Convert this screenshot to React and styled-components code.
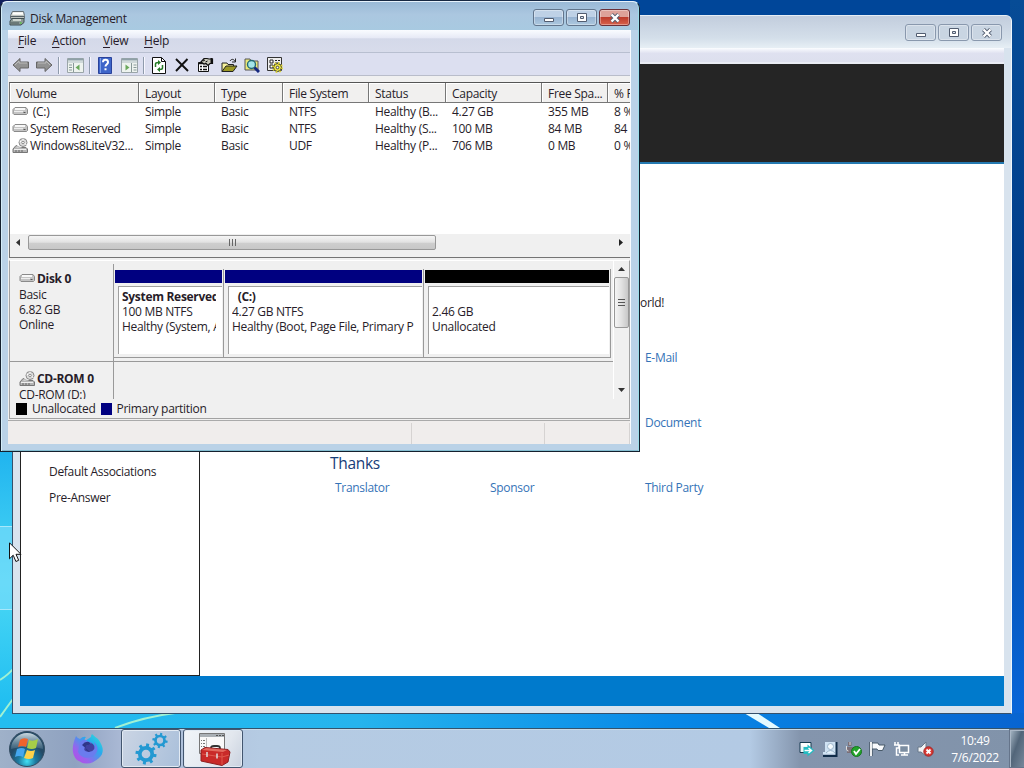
import React from 'react'
import styled, {createGlobalStyle} from 'styled-components'

const volumes = [
  {icon: 'disk', cells: ['\u00a0(C:)', 'Simple', 'Basic', 'NTFS', 'Healthy (B...', '4.27 GB', '355 MB', '8 %']},
  {icon: 'disk', cells: ['System Reserved', 'Simple', 'Basic', 'NTFS', 'Healthy (S...', '100 MB', '84 MB', '84 %']},
  {icon: 'cd', cells: ['Windows8LiteV32...', 'Simple', 'Basic', 'UDF', 'Healthy (P...', '706 MB', '0 MB', '0 %']},
]
const columns = ['Volume', 'Layout', 'Type', 'File System', 'Status', 'Capacity', 'Free Spa...', '% F']

function DriveIcon({kind}) {
  return (
    <Svg width="17" height="15" viewBox="0 0 17 15">
      {kind === 'cd' && <g>
        <circle cx="11" cy="4.5" r="4" fill="#ddd" stroke="#888" />
        <path d="M11 .5v3M7.500 3l2 1M12.500 5.500l2 1" stroke="#fff" />
        <circle cx="11" cy="4.500" r="1.300" fill="#fff" stroke="#888" />
        <path d="M4 7.500 1 11v3.500h14.500V11L14 9.500H8z" fill="#b5b5b5" stroke="#777" />
        <path d="M4.500 9h5M2 11.500h12" stroke="#eee" /><path d="M3 13h8" stroke="#666" strokeDasharray="2 1" />
      </g>}
      {kind === 'disk' && <g>
        <path d="M3 3.500h11l1.500 2v4l-1 1H2l-1-1v-4z" fill="#c4c4c4" stroke="#8a8a8a" />
        <path d="M3 5h10" stroke="#f8f8f8" strokeWidth="2" />
        <path d="M2 7.500h9" stroke="#eee" /><path d="M11.500 8.500h2" stroke="#555" />
      </g>}
    </Svg>
  )
}

function Arrow({flip}) {
  return (
    <ToolSvg width="18" height="16" viewBox="0 0 18 16" $flip={flip}>
      <path d="M1 8 8 1.5V5h8.500v6H8v3.500z" fill="#929292" stroke="#666" />
      <path d="m3 8 4-4v2h8" fill="none" stroke="#bcbcbc" />
    </ToolSvg>
  )
}

function PaneIcon({flip}) {
  return (
    <ToolSvg width="17" height="16" viewBox="0 0 17 16">
      <path d="M.5 1.500h16v14H.5z" fill="#eef3ef" stroke="#9aa5a8" />
      <path d="M1 2.500h15" stroke="#8fa0a8" strokeWidth="2" />
      <path d="M1 5h15" stroke="#b0bec4" />
      {flip
        ? <g><path d="M10.500 6v9M12.500 8h3M12.500 10.500h3M12.500 13h3" stroke="#899" /><path d="m4.500 7.500 4 3-4 3z" fill="#6aa85c" /></g>
        : <g><path d="M6.500 6v9M2 8h3M2 10.500h3M2 13h3" stroke="#899" /><path d="m12.500 7.500-4 3 4 3z" fill="#6aa85c" /></g>}
    </ToolSvg>
  )
}

function CaptionGlyph({kind}) {
  return (
    <Svg width="14" height="12" viewBox="0 0 14 12">
      {kind === 'min' && <path d="M2.500 6.500h9v3h-9z" fill="#fff" stroke="#525d70" />}
      {kind === 'max' && <g>
        <path d="M2.500 1.500h9v8h-9z" fill="#fff" stroke="#525d70" />
        <path d="M5.500 4.500h3v2h-3z" fill="#dce5ef" stroke="#525d70" />
      </g>}
      {kind === 'close' && <g>
        <path d="m3.500 2.500 7 7m0-7-7 7" stroke="#525d70" strokeWidth="4" />
        <path d="m3.500 2.500 7 7m0-7-7 7" stroke="#fff" strokeWidth="2.400" />
      </g>}
    </Svg>
  )
}

function Caption({active}) {
  return (
    <CaptionButtons $active={active}>
      {['min', 'max', 'close'].map(kind => (
        <CaptionButton key={kind} $active={active} $close={kind === 'close'}><CaptionGlyph kind={kind} /></CaptionButton>
      ))}
    </CaptionButtons>
  )
}

function SetupWindow() {
  return (
    <BackWindow>
      <BackTitle><Caption /></BackTitle>
      <BackMenu />
      <BackClient>
        <Banner />
        <BackBody>
          <Sidebar>
            <SideItem>Default Associations</SideItem>
            <SideItem>Pre-Answer</SideItem>
          </Sidebar>
          <Main>
            <Greeting>orld!</Greeting>
            <Links><Link $col={3}>E-Mail</Link></Links>
            <Links><Link $col={3}>Document</Link></Links>
            <Thanks>Thanks</Thanks>
            <Links><Link>Translator</Link><Link>Sponsor</Link><Link>Third Party</Link></Links>
          </Main>
        </BackBody>
        <Footer />
      </BackClient>
    </BackWindow>
  )
}

function Toolbar() {
  return (
    <Tools>
      <Arrow /><Arrow flip />
      <Divider $gap={5} />
      <Slot $w={26}><PaneIcon /></Slot>
      <Divider $gap={1} />
      <Slot $w={24}>
        <Svg width="14" height="17" viewBox="0 0 14 17">
          <path d="M.5.5h13v16H.5z" fill="#3e65c9" stroke="#2a429b" /><path d="M2.500 1v15" stroke="#7ea0e8" />
          <path d="M5 5.200c0-3.200 5-3.200 5 0 0 2-2.500 2-2.500 4.300M7.500 11.300v2" fill="none" stroke="#fff" strokeWidth="2" />
        </Svg>
      </Slot>
      <Slot $w={24}><PaneIcon flip /></Slot>
      <Divider $gap={2} />
      <Slot $w={24}>
        <Svg width="14" height="17" viewBox="0 0 14 17">
          <path d="M.5.5h9l4 4v12H.5z" fill="#fff" stroke="#111" /><path d="M9.500.5v4h4" fill="none" stroke="#111" />
          <path d="M3.500 10V7q0-1.500 3-1.500M10.500 8v3q0 1.500-3 1.500" fill="none" stroke="#267b27" strokeWidth="1.500" />
          <path d="M6 3v5l3-2.500zM8 10v5l-3-2.500z" fill="#267b27" />
        </Svg>
      </Slot>
      <Slot $w={21}>
        <Svg width="14" height="14" viewBox="0 0 14 14"><path d="m1 1 12 12M12.500 1 1 13" stroke="#111" strokeWidth="1.900" /></Svg>
      </Slot>
      <Slot $w={26}>
        <Svg width="17" height="16" viewBox="0 0 17 16">
          <path d="M1.500 5.500h10v9h-10z" fill="#fff" stroke="#111" /><path d="M1 6.500h9M3 9.500h2m1 0h4M3 12.500h2m1 0h4" stroke="#111" strokeWidth="1.500" />
          <path d="m4 5 3-3.500h3l2 .5h3.500v4.500H13l-2 2-2-2-2 .5z" fill="#c7c7b8" stroke="#111" strokeWidth="1.200" /><path d="m6 4 2-1M8.500 5l2-1" stroke="#111" /><path d="M14.500 1v6" stroke="#111" strokeWidth="2" />
        </Svg>
      </Slot>
      <Slot $w={22}>
        <Svg width="17" height="15" viewBox="0 0 17 15">
          <path d="M1 13.500V5h5l1 1.500h5.500V9" fill="#f5f19b" stroke="#222" /><path d="m1 13.500 4-5.500h11l-4 5.500z" fill="#9b9825" stroke="#222" />
          <path d="M9 3c1.500-2.500 4-2 5 .5M14.500.5v3.500h-3.500" fill="none" stroke="#222" />
        </Svg>
      </Slot>
      <Slot $w={24}>
        <Svg width="16" height="16" viewBox="0 0 16 16">
          <path d="M1 13V2h5l1 2h7v9z" fill="#ece879" stroke="#555" /><circle cx="7.500" cy="7.500" r="4" fill="#a5e6e8" stroke="#246b73" strokeWidth="1.400" />
          <path d="m10.500 10.500 4.500 4.500" stroke="#15277f" strokeWidth="3" />
        </Svg>
      </Slot>
      <Slot $w={22}>
        <Svg width="16" height="16" viewBox="0 0 16 16">
          <path d="M.5.5h14v13H.5z" fill="#eee" stroke="#333" /><path d="M3 3h3v3H3zM3 8h3v3H3zM8 3.500h2m1 0h2M8 6h4" fill="#fff" stroke="#222" />
          <circle cx="10.500" cy="10.500" r="4" fill="#e9e23f" stroke="#333" /><circle cx="10.500" cy="10.500" r="4.600" fill="none" stroke="#d9d131" strokeDasharray="1.700 1.910" strokeWidth="1.700" /><circle cx="10.500" cy="10.500" r="1.300" fill="#fff" stroke="#444" />
        </Svg>
      </Slot>
    </Tools>
  )
}

function VolumeList() {
  return (
    <ListBox>
      <ListHead>{columns.map(c => <HeadCell key={c}>{c}</HeadCell>)}</ListHead>
      {volumes.map(v => (
        <VolumeRow key={v.cells[0]}>
          {v.cells.map((c, i) => <Cell key={i} $first={i === 0}>{i === 0 && <DriveIcon kind={v.icon} />}<span>{c}</span></Cell>)}
        </VolumeRow>
      ))}
      <HScroll>
        <Svg width="18" height="9" viewBox="0 0 18 9"><path d="M10 1v7L6 4.500z" fill="#333" /></Svg>
        <HThumb><Svg width="9" height="7" viewBox="0 0 9 7"><path d="M1.500 0v7m3-7v7m3-7v7" stroke="#666" /></Svg></HThumb>
        <ScrollRight width="18" height="9" viewBox="0 0 18 9"><path d="M7 1v7l4-3.500z" fill="#222" /></ScrollRight>
      </HScroll>
    </ListBox>
  )
}

function DiskPane() {
  return (
    <Pane>
      <DiskArea>
        <DiskRows>
          <DiskRow>
            <DiskLabel>
              <DiskName><DriveIcon kind="disk" />Disk 0</DiskName>
              <div>Basic</div><div>6.82 GB</div><div>Online</div>
            </DiskLabel>
            <Partitions>
              <Partition><Stripe /><PartBody><b>System Reserved</b><div>100 MB NTFS</div><div>Healthy (System, A</div></PartBody></Partition>
              <Partition><Stripe /><PartBody><b>&nbsp; (C:)</b><div>4.27 GB NTFS</div><div>Healthy (Boot, Page File, Primary P</div></PartBody></Partition>
              <Partition><Stripe $free /><PartBody><b>&nbsp;</b><div>2.46 GB</div><div>Unallocated</div></PartBody></Partition>
            </Partitions>
          </DiskRow>
          <DiskRow $last>
            <DiskLabel $cd><DiskName><DriveIcon kind="cd" />CD-ROM 0</DiskName><div>CD-ROM (D:)</div></DiskLabel>
          </DiskRow>
        </DiskRows>
        <VScroll>
          <Svg width="9" height="12" viewBox="0 0 9 12"><path d="m1 8 3.500-4L8 8z" fill="#333" /></Svg>
          <VThumb><Svg width="7" height="9" viewBox="0 0 7 9"><path d="M0 1.500h7m-7 3h7m-7 3h7" stroke="#555" /></Svg></VThumb>
          <ScrollDown width="9" height="12" viewBox="0 0 9 12"><path d="m1 4 3.500 4L8 4z" fill="#333" /></ScrollDown>
        </VScroll>
      </DiskArea>
      <Legend><Swatch /> <span>Unallocated</span><Swatch $primary /> <span>Primary partition</span></Legend>
    </Pane>
  )
}

function DiskWindow() {
  return (
    <FrontWindow>
      <FrontTitle>
        <Svg width="17" height="16" viewBox="0 0 17 16">
          <path d="M3.500 1.500h11l1 4v3h-14v-3z" fill="#dfe3dc" stroke="#657078" />
          <path d="M4 3.500h10" stroke="#fff" strokeWidth="2" /><path d="M2 6.500h13" stroke="#566268" strokeWidth="1.500" />
          <path d="M3 8.500h12v4l-3 2.500H1V11z" fill="#8b9895" stroke="#404e52" />
          <path d="M4 10h8" stroke="#e5eae4" strokeWidth="1.500" /><path d="M2 13h8" stroke="#4a585a" /><path d="M11 13h1.500" stroke="#5dcf45" strokeWidth="1.500" />
        </Svg>
        <Title>Disk Management</Title>
        <Caption active />
      </FrontTitle>
      <FrontClient>
        <Menu>
          <MenuItem $w={34}><u>F</u>ile</MenuItem><MenuItem $w={51}><u>A</u>ction</MenuItem>
          <MenuItem $w={41}><u>V</u>iew</MenuItem><MenuItem><u>H</u>elp</MenuItem>
        </Menu>
        <Toolbar />
        <VolumeList />
        <DiskPane />
        <Status><StatusCell /><StatusCell /><StatusCell /></Status>
      </FrontClient>
    </FrontWindow>
  )
}

function Gear({x, y, r}) {
  const teeth = [0, 45, 90, 135]
  return (
    <g stroke="#2499d2">
      <circle cx={x} cy={y} r={r} fill="none" strokeWidth={r * .6} />
      {teeth.map(a => (
        <g key={a} transform={`rotate(${a + 10} ${x} ${y})`} strokeWidth={r * .48}>
          <path d={`M${x} ${y - r * 1.700}v${r * .6}M${x} ${y + r * 1.700}v${-r * .6}`} />
        </g>
      ))}
    </g>
  )
}

function Taskbar() {
  return (
    <Bar>
      <Launcher $w={60}>
        <Svg width="40" height="40" viewBox="0 0 40 40">
          <defs>
            <radialGradient id="orb" cx=".5" cy=".85"><stop stopColor="#42e0f4" /><stop offset=".5" stopColor="#1d799f" /><stop offset="1" stopColor="#244a66" /></radialGradient>
            <linearGradient id="shine" x2="0" y2="1"><stop stopColor="#e8f2f7" stopOpacity=".85" /><stop offset="1" stopColor="#9bbac8" stopOpacity=".2" /></linearGradient>
          </defs>
          <circle cx="20" cy="20" r="17.500" fill="url(#orb)" stroke="#344d62" />
          <path d="M4 20a16 16 0 0 1 32 0q-15-5-32 0" fill="url(#shine)" />
          <path d="M13 11q3-3 8-1l-2 8q-4-2-8 0z" fill="#ef632c" />
          <path d="M22 11q4 2 9-1l-2 9q-4 2-9 0z" fill="#a6ce48" />
          <path d="M10 20q5-2 8 0l-2 8q-4-2-8 0z" fill="#45a7ef" />
          <path d="M20 21q4 2 8 0l-2 8q-4 2-9 0z" fill="#ffd249" />
        </Svg>
      </Launcher>
      <Launcher $w={62}>
        <Svg width="32" height="32" viewBox="0 0 32 32">
          <defs><linearGradient id="fox" x1="1" y1="0" x2="0" y2="1"><stop stopColor="#31ead7" /><stop offset=".35" stopColor="#28abec" /><stop offset=".7" stopColor="#9863ed" /><stop offset="1" stopColor="#bd48e5" /></linearGradient></defs>
          <path d="M4 3q1 2 4 3 3-3 6-2-2 2-1 4l6-4q0-2 1-3 3 3 6 5 9 12 1 19-11 10-22 2Q-3 19 4 3" fill="url(#fox)" />
          <circle cx="16" cy="16" r="7" fill="#4140a0" /><path d="M8 9q4-4 7-1l5 2-6 3q-5 5 3 6 8-1 5-10 8 8-2 15Q10 27 6 19" fill="#6a7cee" />
          <path d="M10 12q3-4 7-3l2 2-5 2q-2 5 4 6" fill="#2f3589" />
        </Svg>
      </Launcher>
      <TaskButton>
        <Svg width="36" height="34" viewBox="0 0 36 34"><Gear x={13} y={22} r={6.2} /><Gear x={27} y={8.5} r={4.5} /></Svg>
      </TaskButton>
      <TaskButton $bright>
        <Svg width="36" height="34" viewBox="0 0 36 34">
          <path d="M4.500 1.500h25v20h-25z" fill="#f9f9f9" stroke="#777" /><path d="M5 3.500h24" stroke="#aab0b5" strokeWidth="3" /><path d="M21 3.500h2m1 0h2m1 0h2" stroke="#555" />
          <path d="M11.500 6v14" stroke="#bbb" /><path d="M6 8.500h1m1 0h2M6 11.500h1m1 0h2M6 14.500h1m1 0h2" stroke="#777" /><path d="M16 17v-1q0-2 3-2h3q3 0 3 2v2" fill="none" stroke="#333" strokeWidth="1.800" />
          <path d="m6 18 4-2.500 23 2 2 2.500-2 10-6 3.500L6 29z" fill="#c92a29" stroke="#8f1f20" /><path d="m7 18 4-2 21 2-4 2z" fill="#e36a5f" /><path d="m7 22 20 3 7-2M27 21v12" fill="none" stroke="#e0584d" /><path d="M12 20v5M22 21.500v5" stroke="#ddd" strokeWidth="1.500" />
        </Svg>
      </TaskButton>
      <Tray>
        <Svg width="16" height="16" viewBox="0 0 16 16"><path d="M1 1.500h11v10H1z" fill="#eef8f8" stroke="#173b50" /><path d="M2 3.500h9" stroke="#fff" strokeWidth="3" /><path d="M4.500 6h4V3.500l7 6-7 6V13h-4z" fill="#23bcc2" /><path d="M5.500 9.500H12M9.500 7l3 2.500-3 2.500" fill="none" stroke="#fff" strokeWidth="1.500" /></Svg>
        <Svg width="16" height="16" viewBox="0 0 16 16"><path d="M3 1h11v12.500H1V11h2z" fill="#cfe2f3" /><path d="M14.500 1v14H1" fill="none" stroke="#102c49" strokeWidth="2" /><circle cx="8.500" cy="5.500" r="3" fill="#f4fbff" stroke="#9bb4ca" /><path d="M4 12q4.500-5 9 0" fill="#e5f2fb" stroke="#9bb4ca" /></Svg>
        <Svg width="17" height="16" viewBox="0 0 17 16"><path d="M3 1h3.500v4H3zM2 6h8v6H2z" fill="#7b6f78" /><path d="M1.500 5v3q0 2 2 2M5 1v3" fill="none" stroke="#ddd" /><circle cx="11.500" cy="10.500" r="5" fill="#23a52b" stroke="#16771f" /><path d="m9 10 2 3 4-5" fill="none" stroke="#fff" strokeWidth="1.800" /></Svg>
        <Svg width="17" height="16" viewBox="0 0 17 16"><path d="M2 1v14" stroke="#475969" strokeWidth="3.500" /><path d="M3 2h6l1 2h6l-2.500 5.500H9L8 8H3z" fill="#f8fafc" stroke="#475969" /><path d="M2 1v14" stroke="#fff" strokeWidth="1.800" /></Svg>
        <Svg width="17" height="16" viewBox="0 0 17 16"><path d="M6.500 4.500h9v7h-9z" fill="#7b8da1" stroke="#fff" strokeWidth="1.500" /><path d="M8 14h7M11.500 11v3M2 1v3m3-3v3M1 4h5v3H3.500v7H6" fill="none" stroke="#fff" strokeWidth="1.500" /></Svg>
        <Svg width="17" height="16" viewBox="0 0 17 16"><path d="M1 6h3l5-5v14l-5-4H1z" fill="#f3f4f5" stroke="#69788a" /><circle cx="11.500" cy="10.500" r="4.700" fill="#d93933" stroke="#a62626" /><path d="m9.500 8.500 4 4m0-4-4 4" stroke="#fff" strokeWidth="1.800" /></Svg>
      </Tray>
      <Clock><div>10:49</div><div>7/6/2022</div></Clock>
      <ShowDesktop />
    </Bar>
  )
}

export default function App() {
  return (
    <Desktop>
      <Global />
      <Wallpaper width="1024" height="728" viewBox="0 0 1024 728">
        <defs>
          <linearGradient id="floor"><stop stopColor="#23bdf0" /><stop offset=".35" stopColor="#26b4ed" /><stop offset=".65" stopColor="#0889e7" /><stop offset="1" stopColor="#0864d0" /></linearGradient>
          <linearGradient id="left" x2="0" y2="1"><stop stopColor="#101e5c" /><stop offset=".25" stopColor="#142646" /><stop offset=".62" stopColor="#20b4ef" /><stop offset=".8" stopColor="#4bd8f5" /><stop offset="1" stopColor="#18b9f0" /></linearGradient>
          <linearGradient id="right" x2="0" y2="1"><stop stopColor="#074c96" /><stop offset=".4" stopColor="#003e8b" /><stop offset="1" stopColor="#0967db" /></linearGradient>
        </defs>
        <path d="M0 0h1024v728H0z" fill="#004699" />
        <path d="M0 0h600v2H0z" fill="#172741" />
        <path d="M0 0h13v728H0z" fill="url(#left)" />
        <path d="M1010 0h14v728h-14z" fill="url(#right)" />
        <path d="M0 713h1024v15H0z" fill="url(#floor)" />
        <path d="m744 713 25 15h11l-23-15z" fill="#e4faff" />
        <path d="M0 680q9-6 13-11M0 717q7-10 13-18M115 728q28-11 60-15" fill="none" stroke="#a1f1d3" strokeWidth="2" />
        <path d="M0 526.500h13v83H0" fill="#79dcfa" fillOpacity=".65" stroke="#a7e8fb" />
      </Wallpaper>
      <SetupWindow />
      <DiskWindow />
      <Pointer width="13" height="21" viewBox="0 0 13 21"><path d="M.5.8v16l3.700-3.600 2.700 6.300 2.800-1.200-2.700-6H12z" fill="#fff" stroke="#111" /></Pointer>
      <Taskbar />
    </Desktop>
  )
}

const Global = createGlobalStyle`
*{
    box-sizing: border-box;
}
body{
    margin: 0;
    font: 12px/17px 'Open Sans', 'Noto Sans', sans-serif;
    letter-spacing: -0.3px;
    color: #271c29;
    overflow: hidden;
}
`

const Desktop = styled.div`
position: relative;
width: 1024px;
height: 768px;
overflow: hidden;
white-space: nowrap;
display: flex;
flex-direction: column;
justify-content: flex-end;
`
const Svg = styled.svg`
display: block;
flex-shrink: 0;
`
const Wallpaper = styled(Svg)`
position: absolute;
left: 0;
top: 0;
`

const BackWindow = styled.div`
position: absolute;
left: 12px;
top: 15px;
width: 1000px;
height: 699px;
border: 1px solid #35506b;
border-top-color: #e5edf5;
border-right-color: #eff7fc;
border-radius: 6px 6px 0 0;
background: #d8e3ee;
padding: 0 7px 7px;
`
const BackTitle = styled.div`
height: 32px;
background: linear-gradient(#c2cddd, #d4dfea 70%, #e7eff5);
margin: 0 -7px;
padding: 8px 9px 0 0;
display: flex;
justify-content: flex-end;
border-radius: 5px 5px 0 0;
`
const BackMenu = styled.div`
height: 16px;
background: linear-gradient(#fbfdff, #dfe1f0 38%, #dde0ee);
border-bottom: 2px solid #e9ecf4;
`
const BackClient = styled.div`
height: 642px;
background: white;
display: flex;
flex-direction: column;
`
const Banner = styled.div`
height: 100px;
flex-shrink: 0;
background: #252525;
border-bottom: 2px solid #2479b0;
`
const BackBody = styled.div`
display: flex;
flex: 1;
min-height: 0;
`
const Sidebar = styled.div`
width: 180px;
border: 1px solid #222;
border-top: 0;
padding: 295px 0 0 28px;
`
const SideItem = styled.div`
height: 26px;
line-height: 26px;
`
const Main = styled.div`
flex: 1;
padding-top: 128px;
`
const Greeting = styled.div`
height: 22px;
line-height: 22px;
padding-left: 440px;
margin-bottom: 33px;
`
const Links = styled.div`
display: grid;
grid-template-columns: 155px 155px 155px;
padding-left: 135px;
height: 22px;
line-height: 22px;
margin-bottom: 43px;
`
const Link = styled.div`
color: #3573b7;
grid-column: ${p => p.$col || 'auto'};
`
const Thanks = styled.div`
font-size: 15.5px;
line-height: 24px;
height: 24px;
margin: -26px 0 2px;
padding-left: 130px;
color: #183d78;
`
const Footer = styled.div`
height: 30px;
background: #007acc;
`

const FrontWindow = styled.div`
position: absolute;
left: 0;
top: 1px;
width: 640px;
height: 451px;
border: 1px solid #14202e;
border-top-color: #e7f2fc;
border-radius: 7px 7px 0 0;
box-shadow: inset 1px 0 #d5edf8, inset -1px 0 #9bdce8, inset 0 -1px #83bdd1;
background: #bad2e7;
padding: 0 8px 7px 7px;
`
const FrontTitle = styled.div`
display: flex;
align-items: center;
height: 28px;
margin: 0 -7px 0 -6px;
padding: 4px 8px 0 7px;
background: linear-gradient(#9ab9d6, #abc7e0 45%, #a8cae1);
border-radius: 6px 6px 0 0;
`
const Title = styled.div`
margin-left: 4px;
flex: 1;
`
const CaptionButtons = styled.div`
display: flex;
gap: 2px;
margin-top: ${p => p.$active ? '-1px' : '0'};
`
const CaptionButton = styled.div`
width: 31px;
height: 17px;
display: flex;
align-items: center;
justify-content: center;
border: 1px solid ${p => !p.$active ? '#8998ad' : p.$close ? '#6b3038' : '#62758c'};
border-radius: 3px;
box-shadow: inset 0 0 0 1px rgba(255,255,255,.35);
background: ${p => !p.$active ? '#c9d5e2' : p.$close ? 'linear-gradient(#dda29a 0 46%, #bd3d2e 50%, #d8624c)' : 'linear-gradient(#bed1e6 0 46%, #98b4d2 50%, #acc8df)'};
`
const FrontClient = styled.div`
height: 414px;
background: #f0f0f0;
overflow: hidden;
border-right: 1px solid #f9fcff;
`
const Menu = styled.div`
height: 23px;
display: flex;
align-items: center;
padding: 0 0 1px 10px;
background: linear-gradient(#fafcff, #e7eaf6 35%, #d4d9e9 40%, #d8dceb);
border-bottom: 1px solid #b8bfd0;
`
const MenuItem = styled.div`
width: ${p => p.$w || 40}px;
letter-spacing: -0.2px;
u{
    text-underline-offset: 2px;
}
`
const Tools = styled.div`
height: 23px;
display: flex;
align-items: center;
padding: 2px 0 0 4px;
background: #dcdff0;
border-bottom: 1px solid #b9bdca;
svg + svg{
    margin-left: 5px;
}
`
const ToolSvg = styled(Svg)`
transform: ${p => p.$flip ? 'scaleX(-1)' : 'none'};
`
const Slot = styled.div`
width: ${p => p.$w}px;
display: flex;
justify-content: center;
`
const Divider = styled.div`
width: 2px;
height: 17px;
border-left: 1px solid #8f9bac;
border-right: 1px solid #f7f7ff;
margin: 0 2px 0 ${p => p.$gap}px;
`

const ListBox = styled.div`
margin: 6px 0 0 1px;
height: 176px;
border: 1px solid #747474;
border-top-color: #555;
border-right: 0;
background: white;
display: flex;
flex-direction: column;
overflow: hidden;
`
const ListHead = styled.div`
display: grid;
grid-template-columns: 129px 76px 68px 86px 77px 96px 66px 24px;
height: 20px;
flex-shrink: 0;
background: #f1f0ef;
border-bottom: 1px solid #777;
`
const HeadCell = styled.div`
padding-left: 6px;
line-height: 21px;
border-right: 1px solid #777;
box-shadow: inset 1px 1px #fff;
overflow: hidden;
&:last-child{
    border-right: 0;
}
`
const VolumeRow = styled.div`
display: grid;
grid-template-columns: 129px 76px 68px 86px 77px 96px 66px 24px;
height: 17px;
`
const Cell = styled.div`
display: flex;
align-items: center;
gap: 1px;
padding-left: ${p => p.$first ? 2 : 6}px;
overflow: hidden;
`
const HScroll = styled.div`
height: 16px;
margin-top: auto;
margin-bottom: 7px;
flex-shrink: 0;
display: flex;
align-items: center;
background: #f0f0f0;
box-shadow: 0 7px #f0f0f0;
`
const HThumb = styled.div`
width: 408px;
height: 15px;
display: flex;
align-items: center;
justify-content: center;
border: 1px solid #989898;
border-radius: 2px;
background: linear-gradient(#f5f5f5, #e2e2e2 48%, #cecece 55%, #c7c7c7);
`
const ScrollRight = styled(Svg)`
margin-left: auto;
`
const ScrollDown = styled(Svg)`
margin-top: auto;
`

const Pane = styled.div`
height: 159px;
margin: 2px 0 0 1px;
border: 1px solid #a2a2a2;
border-top-color: #fff;
display: flex;
flex-direction: column;
`
const DiskArea = styled.div`
display: flex;
height: 138px;
overflow: hidden;
`
const DiskRows = styled.div`
width: 604px;
flex-shrink: 0;
border-right: 1px solid #fff;
padding-top: 3px;
`
const DiskRow = styled.div`
display: flex;
height: 98px;
border-bottom: ${p => p.$last ? '0' : '1px solid #999'};
`
const DiskLabel = styled.div`
width: 104px;
height: ${p => p.$cd ? 37 : 97}px;
padding: ${p => p.$cd ? '9px' : '7px'} 0 0 9px;
border-right: 1px solid #999;
line-height: 15px;
overflow: hidden;
`
const DiskName = styled.div`
display: flex;
align-items: center;
gap: 1px;
font-weight: bold;
height: 15px;
margin-bottom: 1px;
`
const Partitions = styled.div`
display: grid;
grid-template-columns: 110px 200px 187px;
height: 89px;
margin-top: 5px;
`
const Partition = styled.div`
border-right: 1px solid #999;
border-bottom: 1px solid #999;
padding: 1px 1px 0;
min-width: 0;
`
const Stripe = styled.div`
height: 13px;
background: ${p => p.$free ? '#000' : '#000080'};
`
const PartBody = styled.div`
margin: 3px 0 0 3px;
height: 68px;
padding: 2px 6px 0 3px;
background: #fff;
border: 1px solid #a0a0a0;
border-right: 0;
border-bottom: 0;
line-height: 15px;
overflow: hidden;
b, div{
    display: block;
    overflow: hidden;
}
`
const VScroll = styled.div`
width: 16px;
display: flex;
flex-direction: column;
align-items: center;
padding: 2px 0 3px;
`
const VThumb = styled.div`
width: 15px;
height: 51px;
margin-top: 2px;
border: 1px solid #989898;
border-radius: 2px;
display: flex;
align-items: center;
justify-content: center;
background: linear-gradient(90deg, #f5f5f5, #e2e2e2 48%, #c7c7c7);
`
const Legend = styled.div`
height: 19px;
display: flex;
align-items: center;
padding-left: 6px;
gap: 5px;
`
const Swatch = styled.i`
width: 11px;
height: 12px;
background: ${p => p.$primary ? '#000080' : '#000'};
`
const Status = styled.div`
height: 24px;
margin-top: 1px;
border-top: 1px solid #aaa;
display: grid;
grid-template-columns: 404px 133px 1fr;
background: #f0edec;
padding-top: 2px;
`
const StatusCell = styled.div`
border-right: 1px solid #d6d3d2;
`

const Bar = styled.div`
position: relative;
height: 40px;
border-top: 1px solid #33536c;
box-shadow: inset 0 1px #c8dae8;
background: linear-gradient(90deg, #9fb1c9 0, #8fa2c0 75px, #a9b8d4 120px, #b5cbe3 260px, #b3cae4 750px, #8495ad 800px, #8193aa);
display: flex;
align-items: center;
`
const Launcher = styled.div`
width: ${p => p.$w}px;
display: flex;
justify-content: center;
&:first-child{
    width: 54px;
    margin-right: 3px;
}
`
const TaskButton = styled.div`
width: 60px;
height: 39px;
border: 1px solid #43566f;
border-radius: 3px;
box-shadow: inset 0 0 0 1px #e2eaf3;
background: ${p => p.$bright ? 'linear-gradient(120deg, #f1f5f9, #e2e7ee 65%, #c9d1de)' : 'linear-gradient(110deg, #cbd5e4, #a9bfda)'};
display: flex;
align-items: center;
justify-content: center;
margin-left: 2px;
`
const Tray = styled.div`
display: flex;
gap: 7px;
margin-left: auto;
margin-right: 10px;
`
const Clock = styled.div`
width: 62px;
margin-right: 3px;
text-align: center;
color: white;
line-height: 17px;
`
const ShowDesktop = styled.div`
width: 15px;
height: 39px;
border: 1px solid #65748a;
border-right: 0;
background: linear-gradient(110deg, #a9b9c7, #526579 45%, #77889b);
box-shadow: inset 1px 1px #aab7c6;
`
const Pointer = styled(Svg)`
position: absolute;
left: 9px;
top: 542px;
`
